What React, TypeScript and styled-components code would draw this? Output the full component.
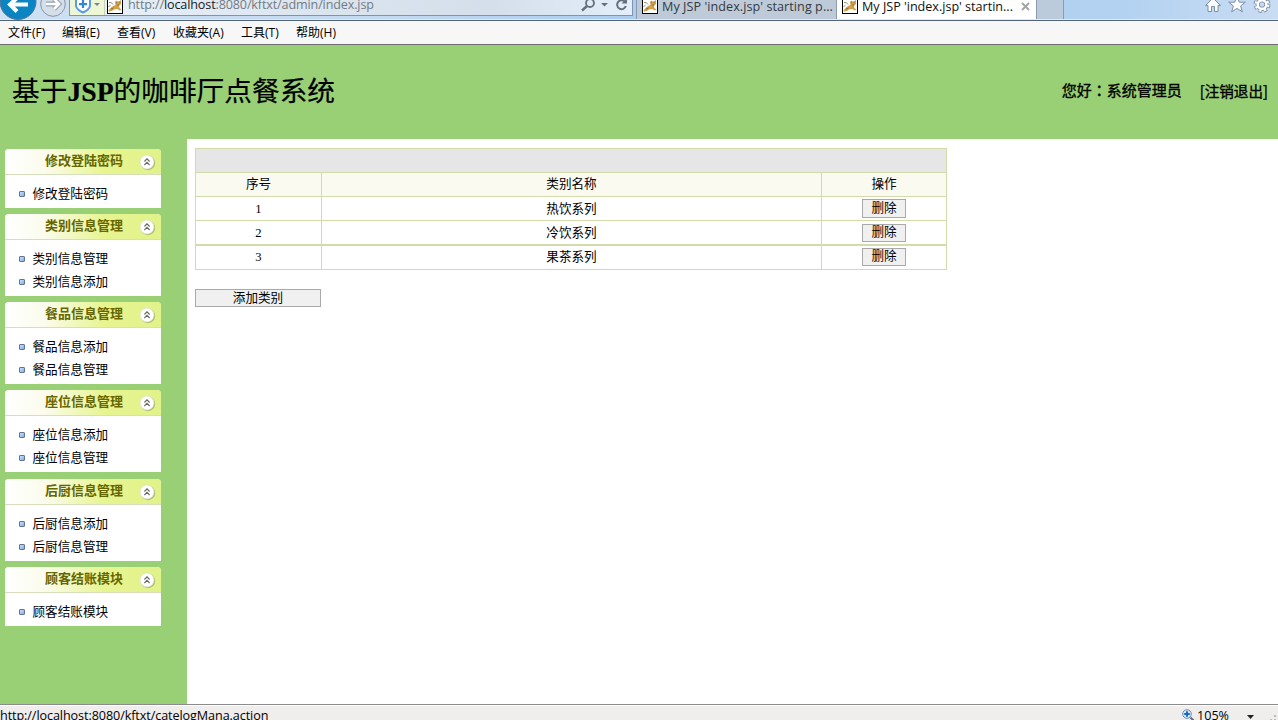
import React from 'react';
import styled, { createGlobalStyle } from 'styled-components';

const GlobalStyle = createGlobalStyle`
  * { box-sizing: border-box; }
  body { margin: 0; overflow: hidden; }
`;

const ui = `'Open Sans', 'Noto Sans CJK SC', sans-serif`;
const song = `'Liberation Serif', 'Noto Sans CJK SC', serif`;

const Window = styled.div`
  width: 1278px;
  height: 720px;
  display: flex;
  flex-direction: column;
  overflow: hidden;
  background: #fff;
  color: #000;
  font-family: ${song};
  font-size: 12.6px;
`;

const NavBar = styled.div`
  display: flex;
  flex: none;
  height: 21px;
  overflow: hidden;
  background: linear-gradient(90deg, #cfe0f2 0, #c3daf2 30%, #a9cdf0 50%, #b3d2f1 88%, #c9dcf3 100%);
  border-bottom: 1px solid #53657a;
  box-shadow: inset 0 -1px 0 #dcebfa;
`;

const NavButtons = styled.svg`
  flex: none;
  width: 69px;
  height: 20px;
`;

const AddressBar = styled.div`
  display: flex;
  align-items: flex-start;
  width: 564px;
  height: 16px;
  border: 1px solid #8294aa;
  border-top: 0;
  background: linear-gradient(90deg, #e9f1fa 0, #dbe5f0 45%, #d5dfeb 75%, #e4eefa 100%);
`;

const Shield = styled.div`
  flex: none;
  width: 35px;
  height: 15px;
  margin-right: 2px;
  background: #edf7d5;
  border-right: 1px solid #c7d3b4;
`;

const Favicon = styled.svg`
  flex: none;
  width: 16px;
  height: 14px;
`;

const Address = styled.div`
  flex: 1;
  margin: -4px 0 0 5px;
  font: 12.6px/18px ${ui};
  letter-spacing: -0.14px;
  color: #747a82;
  white-space: nowrap;
  b { font-weight: 400; color: #17191c; }
`;

const AddressTools = styled.svg`
  flex: none;
  width: 51px;
  height: 15px;
`;

const Tab = styled.div<{ $active?: boolean; $width: number; $gap?: number }>`
  display: flex;
  flex: none;
  width: ${p => p.$width}px;
  height: 19px;
  margin-left: ${p => p.$gap ?? 0}px;
  padding-left: 5px;
  border-left: 1px solid #8b9cb0;
  background: ${p => (p.$active ? '#fff' : '#becad8')};
  color: ${p => (p.$active ? '#111' : '#333a43')};
`;

const TabTitle = styled.span<{ $spacing: number }>`
  flex: none;
  margin-left: 4px;
  margin-top: -2px;
  font: 12.6px/18px ${ui};
  letter-spacing: ${p => p.$spacing}px;
  white-space: nowrap;
`;

const CloseMark = styled.svg`
  flex: none;
  width: 9px;
  height: 9px;
  margin: 2px 0 0 8px;
`;

const NewTab = styled.div`
  width: 28px;
  height: 19px;
  background: #bccbdb;
  border: solid #8b9cb0;
  border-width: 0 1px;
`;

const WindowTools = styled.svg`
  flex: none;
  width: 74px;
  height: 18px;
  margin-left: auto;
`;

const MenuBar = styled.div`
  display: flex;
  flex: none;
  height: 24px;
  padding-left: 8px;
  background: #f7f7f7;
  border-bottom: 1px solid #6e6b75;
`;

const MenuItem = styled.span<{ $width: number }>`
  flex: none;
  width: ${p => p.$width}px;
  font: 12px/24px ${ui};
  white-space: nowrap;
`;

const Banner = styled.header`
  display: flex;
  flex: none;
  justify-content: space-between;
  align-items: center;
  height: 94px;
  padding: 0 10px 0 12px;
  background: #9ad075;
`;

const Title = styled.h1`
  margin: 0;
  font-size: 27.7px;
  line-height: 40px;
  font-weight: 400;
  white-space: nowrap;
  -webkit-text-stroke: 0.2px #000;
`;

const UserInfo = styled.div`
  display: flex;
  gap: 18px;
  margin-top: -3px;
  font: 15px/20px 'Noto Sans CJK SC', sans-serif;
  -webkit-text-stroke: 0.35px #000;
`;

const Colon = styled.span`
  font-family: 'Noto Sans CJK TC', sans-serif;
`;

const Logout = styled.span`
  font-size: 14.6px;
  padding-top: 1px;
`;

const Main = styled.div`
  display: flex;
  flex: 1;
  min-height: 0;
`;

const Sidebar = styled.nav`
  display: flex;
  flex-direction: column;
  flex: none;
  width: 187px;
  padding: 10px 0 0 5px;
  background: #9ad075;
`;

const Group = styled.section<{ $height: number; $gap: number }>`
  width: 156px;
  height: ${p => p.$height}px;
  flex: none;
  margin-bottom: ${p => p.$gap}px;
  background: #fff;
  border-radius: 4px 4px 0 0;
`;

const GroupHead = styled.div`
  display: flex;
  align-items: center;
  height: 26px;
  padding: 0 5px 0 40px;
  border-bottom: 1px solid #d6debd;
  border-radius: 4px 4px 0 0;
  background: linear-gradient(90deg, #fff 0, #fbfced 25%, #e7f591 63%, #e2f28a 100%);
`;

const GroupTitle = styled.span`
  flex: 1;
  margin-top: -3px;
  font: bold 13px/20px 'Noto Sans CJK SC', sans-serif;
  color: #666600;
  white-space: nowrap;
`;

const Links = styled.div`
  padding-top: 6px;
`;

const LinkRow = styled.div`
  display: flex;
  align-items: center;
  height: 23px;
  padding-left: 14px;
`;

const Bullet = styled.i`
  width: 6px;
  height: 6px;
  margin: 3px 7.5px 0 0;
  border: 1px solid #66758e;
  border-radius: 1px;
  background: linear-gradient(135deg, #c8dfff, #7eaef0);
`;

const Content = styled.main`
  flex: 1;
  padding: 9px 8px;
`;

const Table = styled.div`
  width: 752px;
  border: 1px solid #d1dcaa;
`;

const Caption = styled.div`
  height: 23px;
  background: #e6e6e6;
`;

const Row = styled.div<{ $head?: boolean; $thick?: boolean }>`
  display: grid;
  grid-template-columns: 125px 500px 125px;
  border-top: ${p => (p.$thick ? 2 : 1)}px solid #d1dcaa;
  background: ${p => (p.$head ? '#fafaf1' : '#fff')};
`;

const Cell = styled.div<{ $raised?: boolean }>`
  display: flex;
  align-items: center;
  justify-content: center;
  height: 23px;
  padding-bottom: ${p => (p.$raised ? 2 : 0)}px;
  line-height: 18px;
  & + & { border-left: 1px solid #d1dcaa; }
`;

const Button = styled.button<{ $width: number; $height?: number; $lift?: number }>`
  display: flex;
  align-items: center;
  justify-content: center;
  width: ${p => p.$width}px;
  height: ${p => p.$height ?? 18}px;
  padding: 0 0 ${p => p.$lift ?? 1}px;
  border: 1px solid #a9a9a9;
  background: #f0f0f0;
  color: #000;
  font: 12.6px/15px ${song};
`;

const Spacer = styled.div`
  height: 19px;
`;

const StatusBar = styled.footer`
  display: flex;
  flex: none;
  height: 16px;
  border-top: 1px solid #8b8b8b;
  background: #f0eded;
  box-shadow: inset 0 1px 0 #fff;
  font: 12.6px/20px ${ui};
`;

const StatusText = styled.span`
  flex: 1;
  letter-spacing: -0.08px;
  margin-top: 1px;
  white-space: nowrap;
`;

const StatusIcon = styled.svg`
  flex: none;
  width: 13px;
  height: 15px;
  margin: 3px 2px 0 0;
`;

const Zoom = styled.span`
  width: 48px;
  margin-top: 1px;
`;

const StatusArrow = styled.svg`
  flex: none;
  width: 33px;
  height: 15px;
`;

function CatIcon() {
  return (
    <Favicon viewBox="0 0 16 14">
      <path d="M0 0H16V14H0Z" fill="#000" />
      <path d="M1 0H15V13H1Z" fill="#fff" />
      <path d="M1.5 10.5 4 7.5 7 5.5 8.5 5 8 2 9 0.5 10.5 1.5 12.5 1 14 0 14 4 12 6 12.5 8 14.5 9.5 13 10.5 10 9 7 9.5 5 11 2 11.6Z" fill="#d3a04a" />
      <path d="M2 2.5Q5 2 6 4.5M1.5 6.5 3.5 5.5M4 9 6.5 8M9 2.5 10 3M12.2 3 13 2.5M10 5h2" fill="none" stroke="#6e5a3a" strokeWidth=".7" />
    </Favicon>
  );
}

function Collapse() {
  return (
    <svg width="18" height="18" viewBox="0 0 18 18">
      <circle cx="9.9" cy="9.9" r="7.3" fill="#8f9a5a" opacity=".6" />
      <circle cx="9" cy="9" r="7" fill="#fff" stroke="#d9dcc8" strokeWidth=".6" />
      <path d="M6.4 8.5 9 5.9 11.6 8.5M6.4 12 9 9.4 11.6 12" fill="none" stroke="#666" strokeWidth="1.1" />
    </svg>
  );
}

const menus: [string, number][] = [
  ['文件(F)', 54], ['编辑(E)', 55], ['查看(V)', 56], ['收藏夹(A)', 68], ['工具(T)', 55], ['帮助(H)', 60],
];

const groups: { title: string; links: string[]; height: number; gap: number }[] = [
  { title: '修改登陆密码', links: ['修改登陆密码'], height: 59, gap: 6 },
  { title: '类别信息管理', links: ['类别信息管理', '类别信息添加'], height: 82, gap: 6 },
  { title: '餐品信息管理', links: ['餐品信息添加', '餐品信息管理'], height: 82, gap: 6 },
  { title: '座位信息管理', links: ['座位信息添加', '座位信息管理'], height: 82, gap: 7 },
  { title: '后厨信息管理', links: ['后厨信息添加', '后厨信息管理'], height: 82, gap: 6 },
  { title: '顾客结账模块', links: ['顾客结账模块'], height: 59, gap: 0 },
];

const categories = ['热饮系列', '冷饮系列', '果茶系列'];

export default function App() {
  return (
    <Window>
      <GlobalStyle />
      <NavBar>
        <NavButtons viewBox="0 0 69 20">
          <circle cx="18" cy="1.5" r="18" fill="#0b84c4" stroke="#5a7590" />
          <path d="M28 4.5H10M17-2 10 4.5 17 11.5" fill="none" stroke="#fff" strokeWidth="4" />
          <circle cx="53" cy="4" r="12.3" fill="#d5dfea" stroke="#8795a5" />
          <path d="M46 4H59M54-1 59 4 54 9" fill="none" stroke="#95a2b1" strokeWidth="4.8" />
          <path d="M46 4H58.5M54-1 59 4 54 9" fill="none" stroke="#fff" strokeWidth="2.6" />
        </NavButtons>
        <AddressBar>
          <Shield>
            <svg width="34" height="15" viewBox="0 0 34 15">
              <path d="M6 0V6Q7 10 13 12.5 19 10 20 6V0" fill="#fff" stroke="#5b9be6" strokeWidth="2" />
              <path d="M13 0V8M9 4.2H17" stroke="#3583dc" strokeWidth="2.2" />
              <path d="M24 3h6l-3 3Z" fill="#7b8490" />
            </svg>
          </Shield>
          <CatIcon />
          <Address>http://<b>localhost</b>:8080/kftxt/admin/index.jsp</Address>
          <AddressTools viewBox="0 0 51 15">
            <circle cx="9" cy="3" r="4" fill="none" stroke="#666f7b" strokeWidth="1.8" />
            <path d="M6 6 1 10.5" stroke="#666f7b" strokeWidth="2.4" />
            <path d="M20 3h7l-3.5 3.5Z" fill="#666f7b" />
            <path d="M44 2A4.4 4.4 0 1 0 44.8 6" fill="none" stroke="#666f7b" strokeWidth="2" />
            <path d="M40.5 3.6H46V-1.6Z" fill="#666f7b" />
          </AddressTools>
        </AddressBar>
        <Tab $width={200} $gap={3}>
          <CatIcon />
          <TabTitle $spacing={0.06}>My JSP 'index.jsp' starting p...</TabTitle>
        </Tab>
        <Tab $width={200} $active>
          <CatIcon />
          <TabTitle $spacing={-0.01}>My JSP 'index.jsp' startin...</TabTitle>
          <CloseMark viewBox="0 0 9 9">
            <path d="M1 1 8 8M8 1 1 8" stroke="#a5a5a5" strokeWidth="2" />
          </CloseMark>
        </Tab>
        <NewTab />
        <WindowTools viewBox="0 0 74 18">
          <g fill="#fff" stroke="#7d8fa8" strokeWidth="1">
            <path d="M1.5 5.5 9-2 16.5 5.5H14V11.5H10.5V6.5H7.5V11.5H4V5.5Z" />
            <path d="M33-3.5 35.3 2.2H41.3L36.6 6 38.3 11.8 33 8.4 27.7 11.8 29.4 6 24.7 2.2H30.7Z" />
          </g>
          <circle cx="58" cy="4.5" r="6.2" fill="none" stroke="#7d8fa8" strokeWidth="4.4" strokeDasharray="2.8 2.07" />
          <circle cx="58" cy="4.5" r="4.4" fill="none" stroke="#7d8fa8" strokeWidth="4.2" />
          <circle cx="58" cy="4.5" r="6" fill="none" stroke="#fff" strokeWidth="2.8" strokeDasharray="2 2.71" strokeDashoffset="-.4" />
          <circle cx="58" cy="4.5" r="4.3" fill="none" stroke="#fff" strokeWidth="2.4" />
        </WindowTools>
      </NavBar>
      <MenuBar>
        {menus.map(([label, width]) => <MenuItem key={label} $width={width}>{label}</MenuItem>)}
      </MenuBar>
      <Banner>
        <Title>基于<b>JSP</b>的咖啡厅点餐系统</Title>
        <UserInfo>
          <span>您好<Colon lang="zh-TW">：</Colon>系统管理员</span>
          <Logout>[注销退出]</Logout>
        </UserInfo>
      </Banner>
      <Main>
        <Sidebar>
          {groups.map(g => (
            <Group key={g.title} $height={g.height} $gap={g.gap}>
              <GroupHead>
                <GroupTitle>{g.title}</GroupTitle>
                <Collapse />
              </GroupHead>
              <Links>
                {g.links.map(l => <LinkRow key={l}><Bullet />{l}</LinkRow>)}
              </Links>
            </Group>
          ))}
        </Sidebar>
        <Content>
          <Table>
            <Caption />
            <Row $head>
              <Cell $raised>序号</Cell>
              <Cell $raised>类别名称</Cell>
              <Cell $raised>操作</Cell>
            </Row>
            {categories.map((name, i) => (
              <Row key={name} $thick={i === 2}>
                <Cell $raised={i === 2}>{i + 1}</Cell>
                <Cell $raised={i === 2}>{name}</Cell>
                <Cell $raised={i === 2}><Button $width={44} $height={i === 0 ? 19 : 18}>删除</Button></Cell>
              </Row>
            ))}
          </Table>
          <Spacer />
          <Button $width={126} $lift={0}>添加类别</Button>
        </Content>
      </Main>
      <StatusBar>
        <StatusText>http://localhost:8080/kftxt/catelogMana.action</StatusText>
        <StatusIcon viewBox="0 0 13 15">
          <circle cx="5" cy="6" r="4.3" fill="#d8ebff" stroke="#6c8aa8" />
          <path d="M8.5 9.5 12 13" stroke="#5d6b7c" strokeWidth="2" />
          <path d="M5 3.2V8.8M2.2 6H7.8" stroke="#1369c4" strokeWidth="2" />
        </StatusIcon>
        <Zoom>105%</Zoom>
        <StatusArrow viewBox="0 0 33 15">
          <path d="M2 10h7l-3.5 4Z" fill="#222" />
          <path d="M29 10h2v2h-2zM25 14h2v1h-2zM29 14h2v1h-2z" fill="#bbb" />
        </StatusArrow>
      </StatusBar>
    </Window>
  );
}
